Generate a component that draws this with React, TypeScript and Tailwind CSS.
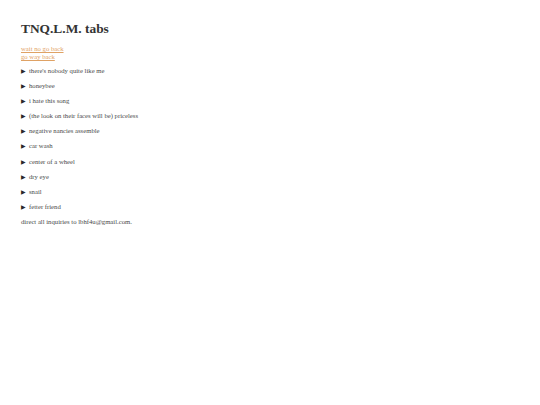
const songs = [
  "there's nobody quite like me",
  "honeybee",
  "i hate this song",
  "(the look on their faces will be) priceless",
  "negative nancies assemble",
  "car wash",
  "center of a wheel",
  "dry eye",
  "snail",
  "fetter friend",
];

export default function App() {
  return (
    <div className="min-h-screen bg-white pl-[21px] pt-[21px] text-[#4a4a4a] font-['Liberation_Serif','Times_New_Roman',serif]">
      <h1 className="text-[13.4px] leading-[16px] font-bold text-[#333]">TNQ.L.M. tabs</h1>

      <div className="mt-[8px] flex flex-col text-[6.7px] leading-[8px] text-[#dfa265]">
        <a href="#" className="underline">wait no go back</a>
        <a href="#" className="underline">go way back</a>
      </div>

      <div className="mt-[6px] flex flex-col gap-[7.1px] text-[6.7px] leading-[8px]">
        {songs.map((title) => (
          <details key={title}>
            <summary className="flex items-center gap-[3px] cursor-pointer list-none">
              <span className="text-[6px] text-[#2a2a2a]">▶</span>
              <span>{title}</span>
            </summary>
          </details>
        ))}
        <p>direct all inquiries to lbhf4u@gmail.com.</p>
      </div>
    </div>
  );
}
